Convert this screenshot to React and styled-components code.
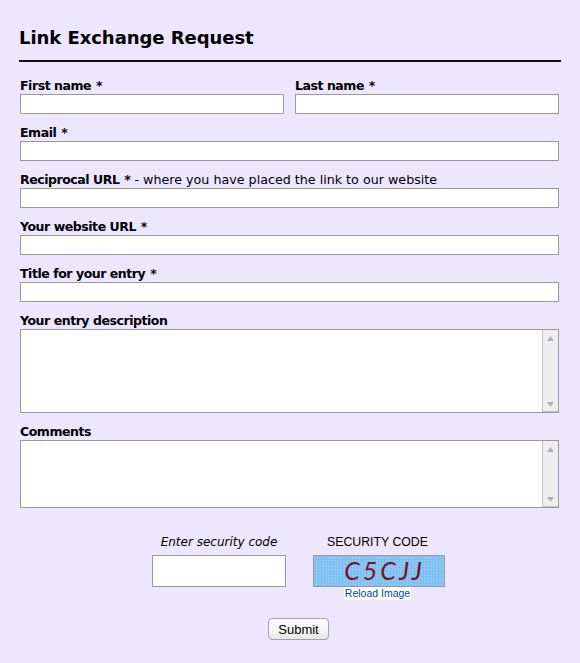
import React from 'react'
import styled, { createGlobalStyle } from 'styled-components'

const GlobalStyle = createGlobalStyle`
  html, body {
    margin: 0;
    padding: 0;
    background: #ece6ff;
  }
  body {
    font-family: "DejaVu Sans", Verdana, sans-serif;
    color: #000;
  }
`

const Page = styled.form`
  width: 580px;
  height: 663px;
  box-sizing: border-box;
  padding: 27px 19px 0;
  overflow: hidden;
`

const Title = styled.h1`
  margin: 0;
  height: 33px;
  border-bottom: 2px solid #111;
  font-size: 18px;
  line-height: 21px;
  letter-spacing: -0.05px;
  font-weight: bold;
  color: #000;
`

const Fields = styled.div`
  display: flex;
  flex-direction: column;
  padding: 16px 2px 0 1px;
  gap: 11px;
`

const Row = styled.div`
  display: flex;
  gap: 11px;
`

const Field = styled.div`
  flex: 1;
  min-width: 0;
`

const Label = styled.label`
  display: block;
  height: 16px;
  font-size: 12.7px;
  line-height: 16px;
  white-space: nowrap;
  color: #000;
`

const Strong = styled.b`
  font-weight: bold;
  font-size: 12.5px;
  letter-spacing: -0.45px;
`

const Required = styled.span`
  margin-left: 1px;
`

const TextInput = styled.input`
  display: block;
  width: 100%;
  box-sizing: border-box;
  height: 20px;
  margin: 0;
  padding: 1px 3px;
  border: 1px solid #999;
  background: #fff;
  border-radius: 0;
  outline: none;
`

const AreaBox = styled.div`
  display: flex;
  height: ${p => p.$height}px;
  box-sizing: border-box;
  border: 1px solid #999;
  background: #fff;
`

const Area = styled.textarea`
  flex: 1;
  min-width: 0;
  border: 0;
  padding: 2px;
  margin: 0;
  resize: none;
  outline: none;
  background: transparent;
`

const Scrollbar = styled.div`
  width: 16px;
  flex: none;
  box-sizing: border-box;
  border-left: 1px solid #c4c4c4;
  border-bottom: 1px solid #c4c4c4;
  background: #eee;
  display: flex;
  flex-direction: column;
  justify-content: space-between;
  align-items: center;
  padding: 6px 0 4px;
`

const Arrow = styled.svg`
  display: block;
  width: 7px;
  height: 5px;
  fill: #a9b0c0;
`

const Captcha = styled.div`
  display: flex;
  justify-content: center;
  gap: 27px;
  margin-top: 26px;
  padding-left: 18px;
  padding-right: 1px;
`

const CaptchaCol = styled.div`
  display: flex;
  flex-direction: column;
  align-items: center;
  width: ${p => p.$width}px;
`

const EntryLabel = styled.label`
  height: 16px;
  font-size: 12px;
  line-height: 16px;
  font-style: italic;
  white-space: nowrap;
  margin-bottom: 5px;
`

const CodeLabel = styled.div`
  height: 16px;
  font-family: "Liberation Sans", Arial, sans-serif;
  font-size: 12.3px;
  line-height: 16px;
  white-space: nowrap;
  margin: 0 3px 5px 0;
`

const CodeInput = styled.input`
  display: block;
  width: 134px;
  height: 32px;
  box-sizing: border-box;
  margin: 0;
  padding: 2px 4px;
  border: 1px solid #999;
  background: #fff;
  border-radius: 0;
  outline: none;
`

const CaptchaImage = styled.div`
  width: 132px;
  height: 32px;
  box-sizing: border-box;
  border: 1px solid #999;
  background-color: #8fcdf8;
  background-image: repeating-conic-gradient(rgba(80, 150, 210, 0.3) 0 25%, transparent 0 50%);
  background-size: 3px 3px;
  text-align: center;
  font-family: Lato, sans-serif;
  font-style: italic;
  font-size: 25px;
  line-height: 29px;
  letter-spacing: 3px;
  color: #7c1022;
  padding-left: 11px;
`

const ReloadLink = styled.a`
  display: block;
  background: #fff;
  font-family: "Liberation Sans", Arial, sans-serif;
  font-size: 10.5px;
  line-height: 13px;
  color: #0b3f9c;
  padding: 0 1px;
  margin-right: 3px;
  text-decoration: none;
  cursor: pointer;
`

const Actions = styled.div`
  display: flex;
  justify-content: center;
  margin-top: 18px;
  padding-left: 18px;
  padding-right: 1px;
`

const SubmitButton = styled.button`
  width: 61px;
  height: 22px;
  box-sizing: border-box;
  padding: 0;
  border: 1px solid #a3a3a3;
  border-radius: 4px;
  background: linear-gradient(#fff, #f4f4f4 60%, #e6e6e6);
  font-family: "Liberation Sans", Arial, sans-serif;
  font-size: 13px;
  color: #000;
`

const TextArea = ({ id, height }) => (
  <AreaBox $height={height}>
    <Area id={id} />
    <Scrollbar>
      <Arrow viewBox="0 0 7 5">
        <path d="M3.5 0L7 5H0z" />
      </Arrow>
      <Arrow viewBox="0 0 7 5">
        <path d="M0 0h7L3.5 5z" />
      </Arrow>
    </Scrollbar>
  </AreaBox>
)

const App = () => (
  <>
    <GlobalStyle />
    <Page onSubmit={e => e.preventDefault()}>
      <Title>Link Exchange Request</Title>
      <Fields>
        <Row>
          <Field>
            <Label htmlFor="first"><Strong>First name <Required>*</Required></Strong></Label>
            <TextInput id="first" />
          </Field>
          <Field>
            <Label htmlFor="last"><Strong>Last name <Required>*</Required></Strong></Label>
            <TextInput id="last" />
          </Field>
        </Row>
        <Field>
          <Label htmlFor="email"><Strong>Email <Required>*</Required></Strong></Label>
          <TextInput id="email" />
        </Field>
        <Field>
          <Label htmlFor="reciprocal">
            <Strong>Reciprocal URL <Required>*</Required></Strong> - where you have placed the link to our website
          </Label>
          <TextInput id="reciprocal" />
        </Field>
        <Field>
          <Label htmlFor="website"><Strong>Your website URL <Required>*</Required></Strong></Label>
          <TextInput id="website" />
        </Field>
        <Field>
          <Label htmlFor="title"><Strong>Title for your entry <Required>*</Required></Strong></Label>
          <TextInput id="title" />
        </Field>
        <Field>
          <Label htmlFor="description"><Strong>Your entry description</Strong></Label>
          <TextArea id="description" height={84} />
        </Field>
        <Field>
          <Label htmlFor="comments"><Strong>Comments</Strong></Label>
          <TextArea id="comments" height={68} />
        </Field>
      </Fields>
      <Captcha>
        <CaptchaCol $width={134}>
          <EntryLabel htmlFor="code">Enter security code</EntryLabel>
          <CodeInput id="code" />
        </CaptchaCol>
        <CaptchaCol $width={132}>
          <CodeLabel>SECURITY CODE</CodeLabel>
          <CaptchaImage>C5CJJ</CaptchaImage>
          <ReloadLink>Reload Image</ReloadLink>
        </CaptchaCol>
      </Captcha>
      <Actions>
        <SubmitButton type="submit">Submit</SubmitButton>
      </Actions>
    </Page>
  </>
)

export default App
